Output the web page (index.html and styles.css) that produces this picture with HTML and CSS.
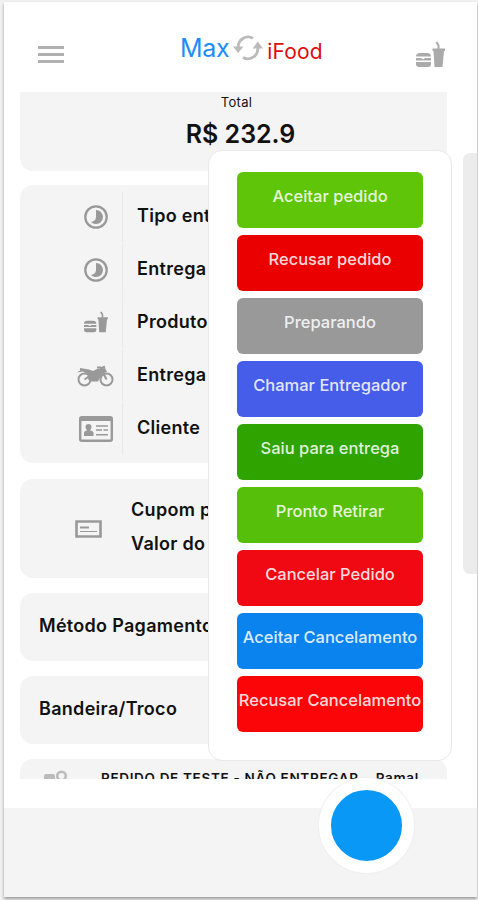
FILE: index.html
```
<!DOCTYPE html>
<html lang="pt-br">
<head>
    <title>Max iFood</title>
    <meta charset="utf-8">
    <meta name="viewport" content="width=device-width, initial-scale=1.0">
    <link rel="stylesheet" href="styles.css">
</head>

<body>
    <svg class="defs">
        <symbol id="lanche" viewBox="0 0 30 28">
            <path d="M1 15.500q0-3.500 4-3.500h7q4 0 4 3.500z"/>
            <path d="M1 17h5l2 1.400 2-1.400h6v2.500H1z"/>
            <path d="M1 21h15v2q0 3-3 3H4q-3 0-3-3z"/>
            <path d="M17.500 7.500H30V10h-1l-1.500 16h-8L18.500 10h-1z"/>
            <path d="M23.500 8V4.500L21.500 1" fill="none" stroke="currentColor" stroke-width="2"/>
        </symbol>
        <symbol id="status" viewBox="0 0 24 24">
            <circle cx="12" cy="12" r="10.700" fill="none" stroke="currentColor" stroke-width="2.300"/>
            <path d="M12 5a7 7 0 1 1-5 12q5-1 5-5z"/>
        </symbol>
    </svg>
    <div class="app">
        <header class="header">
            <div class="menu"><i></i><i></i><i></i></div>
            <div class="logo">
                <span class="max">Max</span>
                <svg class="sync" viewBox="0 0 30 26">
                    <path d="M20 3.200A10 10 0 0 0 5.200 12.500M10 22.500A10 10 0 0 0 24.800 13" fill="none" stroke="currentColor" stroke-width="2.800"/>
                    <path d="M0 11.500h10.400L5.200 18zM19.600 13.500H30L24.800 6.500z"/>
                </svg>
                <span class="ifood">iFood</span>
            </div>
            <svg class="lanche"><use href="#lanche"/></svg>
        </header>

        <main class="content">
            <section class="card total">
                <span>Total</span>
                <strong>R$ 232.9</strong>
            </section>
            <section class="card lista">
                <div class="linha"><div class="icone"><svg class="ic-status"><use href="#status"/></svg></div><b>Tipo entrega</b></div>
                <div class="linha"><div class="icone"><svg class="ic-status"><use href="#status"/></svg></div><b>Entrega</b></div>
                <div class="linha"><div class="icone"><svg class="ic-produto"><use href="#lanche"/></svg></div><b>Produto</b></div>
                <div class="linha">
                    <div class="icone">
                        <svg class="ic-moto" viewBox="0 0 37 22">
                            <g fill="none" stroke="currentColor">
                                <circle cx="7.500" cy="14.500" r="6" stroke-width="2"/>
                                <circle cx="29.500" cy="14.500" r="6" stroke-width="2"/>
                                <path d="M7.500 14.500L14 10M29.500 14.500L23.500 2.500H20M24 3.500L28 1.500" stroke-width="2"/>
                            </g>
                            <path d="M3 3l9 1.500 4 1.500 4-2 4-.5 2 4-3 5-2 4h-8l-3-4 2-3-6-3-6 1 3-2z"/>
                            <path d="M23 4l5-1 2 4-3 1z"/>
                        </svg>
                    </div>
                    <b>Entrega</b>
                </div>
                <div class="linha">
                    <div class="icone">
                        <svg class="ic-cliente" viewBox="0 0 34 26">
                            <rect x="1.200" y="1.200" width="31.600" height="23.600" rx="1.500" fill="none" stroke="currentColor" stroke-width="2.400"/>
                            <path d="M1 1h32v4H1zM5 20v-3q0-2 3-2.500Q6 12 6.500 10t3-2 3 2-1.500 4.500q3.500.5 3.500 2.500v3z"/>
                            <path d="M17 10h12M17 14h6M24.500 14H29M17 18.800h12" stroke="currentColor" stroke-width="1.600"/>
                        </svg>
                    </div>
                    <b>Cliente</b>
                </div>
            </section>
            <section class="card cupom">
                <svg class="ic-cupom" viewBox="0 0 27 18">
                    <path d="M1.500 1.500h24v15h-24z" fill="none" stroke="currentColor" stroke-width="2.600"/>
                    <path d="M5 7.500h9" stroke="currentColor" stroke-width="2"/>
                    <path d="M5 11.500h17" stroke="currentColor"/>
                </svg>
                <div class="cupom-texto">
                    <b>Cupom pedido</b>
                    <b>Valor do cupom</b>
                </div>
            </section>
            <section class="card simples"><b>Método Pagamento</b></section>
            <section class="card simples"><b>Bandeira/Troco</b></section>
            <section class="card endereco">
                <svg class="ic-local" viewBox="0 0 24 20">
                    <rect x="0" y="4" width="11" height="12" rx="2"/>
                    <circle cx="17.500" cy="6" r="4.300" fill="none" stroke="currentColor" stroke-width="2.600"/>
                </svg>
                <b>PEDIDO DE TESTE - NÃO ENTREGAR</b>
                <b>Ramal</b>
            </section>
        </main>

        <footer class="footer"></footer>

        <div class="acoes">
            <button class="verde">Aceitar pedido</button>
            <button class="recusar">Recusar pedido</button>
            <button class="cinza">Preparando</button>
            <button class="chamar">Chamar Entregador</button>
            <button class="saiu">Saiu para entrega</button>
            <button class="pronto">Pronto Retirar</button>
            <button class="cancelar">Cancelar Pedido</button>
            <button class="azul">Aceitar Cancelamento</button>
            <button class="vermelho">Recusar Cancelamento</button>
        </div>
        <div class="scroll"></div>
        <div class="fab"></div>
    </div>
</body>
</html>
```
FILE: styles.css
```
*{
    box-sizing: border-box;
}

body{
    margin: 0;
    height: 900px;
    padding: 2px 1px 3px 4px;
    background: #f1f1f1;
    font-family: Inter, "Liberation Sans", sans-serif;
    color: #111;
    overflow: hidden;
}

.defs{
    display: none;
}

svg{
    display: block;
    fill: currentColor;
}

.app{
    display: flex;
    flex-direction: column;
    position: relative;
    height: 895px;
    background: #fff;
    box-shadow: 0 2px 3px #999;
}

.header{
    display: flex;
    align-items: center;
    justify-content: space-between;
    height: 90px;
    padding: 0 32px 0 34px;
}

.menu{
    display: flex;
    flex-direction: column;
    gap: 4px;
    width: 26px;
    margin-top: 15px;
}

.menu i{
    height: 3px;
    background: #b0b0b0;
}

.logo{
    display: flex;
    align-items: center;
    margin: 2px 0 0 24px;
}

.max{
    font-size: 25px;
    letter-spacing: -.4px;
    color: #1e8df5;
}

.sync{
    width: 30px;
    height: 26px;
    margin: 0 4px 0 4px;
    color: #bbb;
}

.ifood{
    font-size: 21px;
    letter-spacing: .2px;
    margin-top: 7px;
    color: #dc0d0d;
}

.lanche{
    width: 30px;
    height: 28px;
    margin-top: 16px;
    color: #aaa;
}

.content{
    display: flex;
    flex-direction: column;
    height: 687px;
    margin: 0 30px 0 16px;
    overflow: hidden;
}

.card{
    flex-shrink: 0;
    background: #f4f4f4;
    border-radius: 13px;
    margin-bottom: 15px;
    font-size: 18px;
    letter-spacing: .3px;
    white-space: nowrap;
    overflow: hidden;
}

.card b{
    font-weight: 600;
}

.total{
    display: flex;
    flex-direction: column;
    align-items: center;
    height: 79px;
    padding: 2px 0 0 6px;
    border-radius: 0 0 13px 13px;
    margin-bottom: 14px;
}

.total span{
    font-size: 13px;
    line-height: 17px;
}

.total strong{
    margin: 8px 0 0 8px;
    font-size: 25px;
    letter-spacing: 0;
    line-height: 30px;
    font-weight: 600;
}

.lista{
    height: 278px;
    margin-bottom: 16px;
    padding: 5px 0 0 49px;
}

.linha{
    display: flex;
    align-items: center;
    height: 53px;
}

.linha b{
    margin-bottom: 2px;
}

.icone{
    display: flex;
    align-items: center;
    justify-content: center;
    width: 54px;
    height: 51px;
    margin-right: 14px;
    border-right: 1px solid #e9e9e9;
    color: #999;
}

.ic-status{
    width: 24px;
    height: 24px;
}

.ic-produto{
    width: 25px;
    height: 23px;
}

.ic-moto{
    width: 37px;
    height: 22px;
}

.ic-cliente{
    width: 34px;
    height: 26px;
}

.cupom{
    display: flex;
    align-items: center;
    height: 99px;
    padding-left: 55px;
}

.ic-cupom{
    width: 27px;
    height: 18px;
    color: #999;
}

.cupom-texto{
    display: flex;
    flex-direction: column;
    margin: -4px 0 0 29px;
    line-height: 34px;
}

.simples{
    height: 68px;
    padding: 0 19px;
    line-height: 65px;
}

.endereco{
    display: flex;
    gap: 17px;
    height: 90px;
    padding: 11px 0 0 24px;
    font-size: 13.5px;
    letter-spacing: .68px;
}

.ic-local{
    width: 24px;
    height: 20px;
    margin-right: 16px;
    color: #bbb;
}

.footer{
    height: 89px;
    margin-top: auto;
    background: #f4f4f4;
}

.acoes{
    display: flex;
    flex-direction: column;
    gap: 7px;
    position: absolute;
    top: 148px;
    left: 204px;
    width: 244px;
    height: 611px;
    padding: 21px 28px;
    background: #fff;
    border: 1px solid #e9e9e9;
    border-radius: 14px;
}

.acoes button{
    height: 56px;
    padding: 0 0 8px;
    border: 0;
    border-radius: 6px;
    color: #fffd;
    font-family: inherit;
    font-size: 16.5px;
    font-weight: 500;
    white-space: nowrap;
}

.verde{ background: #5fc508; }
.recusar{ background: #eb0000; }
.acoes .cinza{ background: #999; }
.chamar{ background: #465dea; }
.saiu{ background: #2fa400; }
.pronto{ background: #55bf09; }
.cancelar{ background: #f00813; }
.azul{ background: #0a83ef; }
.vermelho{ background: #fc0508; }

.scroll{
    position: absolute;
    top: 151px;
    right: 0;
    width: 14px;
    height: 421px;
    background: #ececec;
    border-radius: 7px 0 0 7px;
}

.fab{
    position: absolute;
    top: 776px;
    left: 315px;
    width: 95px;
    height: 95px;
    background: #0a98f7;
    border: 12px solid #fff;
    border-radius: 50%;
    box-shadow: 0 0 1px 1px #eee;
}
```
